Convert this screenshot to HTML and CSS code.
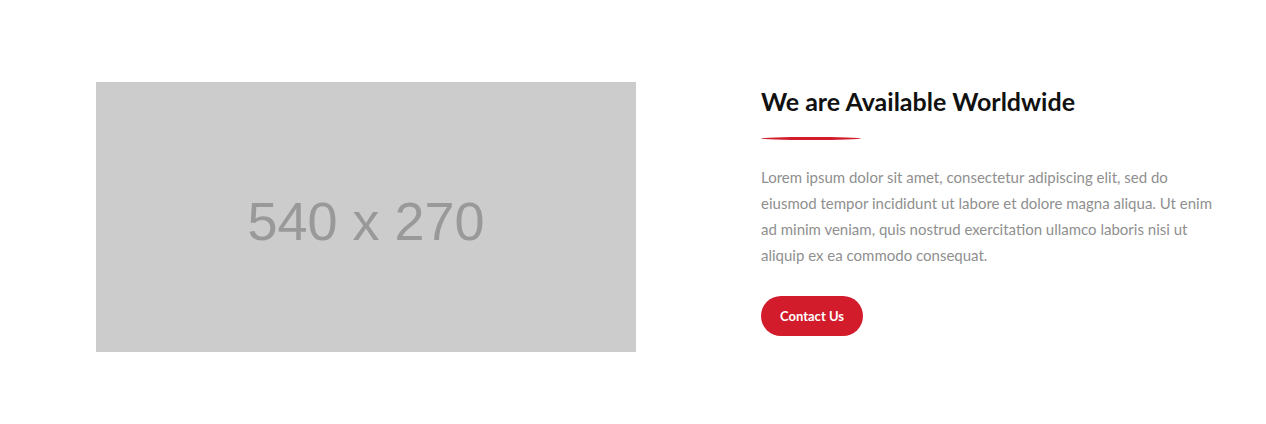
FILE: index.html
```html
<!DOCTYPE html>
<html>
<head>
<meta charset="utf-8">
<link rel="stylesheet" href="styles.css">
</head>
<body>
<section class="about">
  <div class="media">
    <div class="placeholder">540 x 270</div>
  </div>
  <div class="content">
    <h2 class="title">We are Available Worldwide</h2>
    <div class="divider"></div>
    <p class="text">Lorem ipsum dolor sit amet, consectetur adipiscing elit, sed do eiusmod tempor incididunt ut labore et dolore magna aliqua. Ut enim ad minim veniam, quis nostrud exercitation ullamco laboris nisi ut aliquip ex ea commodo consequat.</p>
    <a class="btn" href="#">Contact Us</a>
  </div>
</section>
</body>
</html>
```
FILE: styles.css
```css
html, body {
  margin: 0;
  padding: 0;
  background: #fff;
}
body {
  font-family: "Lato", "Open Sans", sans-serif;
}
.about {
  display: flex;
  align-items: flex-start;
  padding: 82px 0 0 96px;
  gap: 125px;
}
.placeholder {
  width: 540px;
  height: 270px;
  box-sizing: border-box;
  padding-top: 8px;
  background: #cccccc;
  color: #999999;
  font-family: "Liberation Sans", Arial, sans-serif;
  font-size: 54px;
  display: flex;
  align-items: center;
  justify-content: center;
}
.content {
  width: 455px;
  padding-top: 4px;
}
.title {
  margin: 0;
  font-size: 25px;
  font-weight: 700;
  color: #111111;
  line-height: 30px;
}
.divider {
  width: 100px;
  height: 3px;
  background: #d21c2b;
  border-radius: 50%;
  margin: 21px 0 24px;
}
.text {
  margin: 0;
  font-size: 15px;
  line-height: 26px;
  color: #8f8f8f;
}
.btn {
  display: inline-flex;
  align-items: center;
  justify-content: center;
  width: 102px;
  height: 40px;
  border-radius: 20px;
  background: #d21c2b;
  color: #fff;
  font-size: 13px;
  font-weight: 700;
  text-decoration: none;
  margin-top: 28px;
}
```
